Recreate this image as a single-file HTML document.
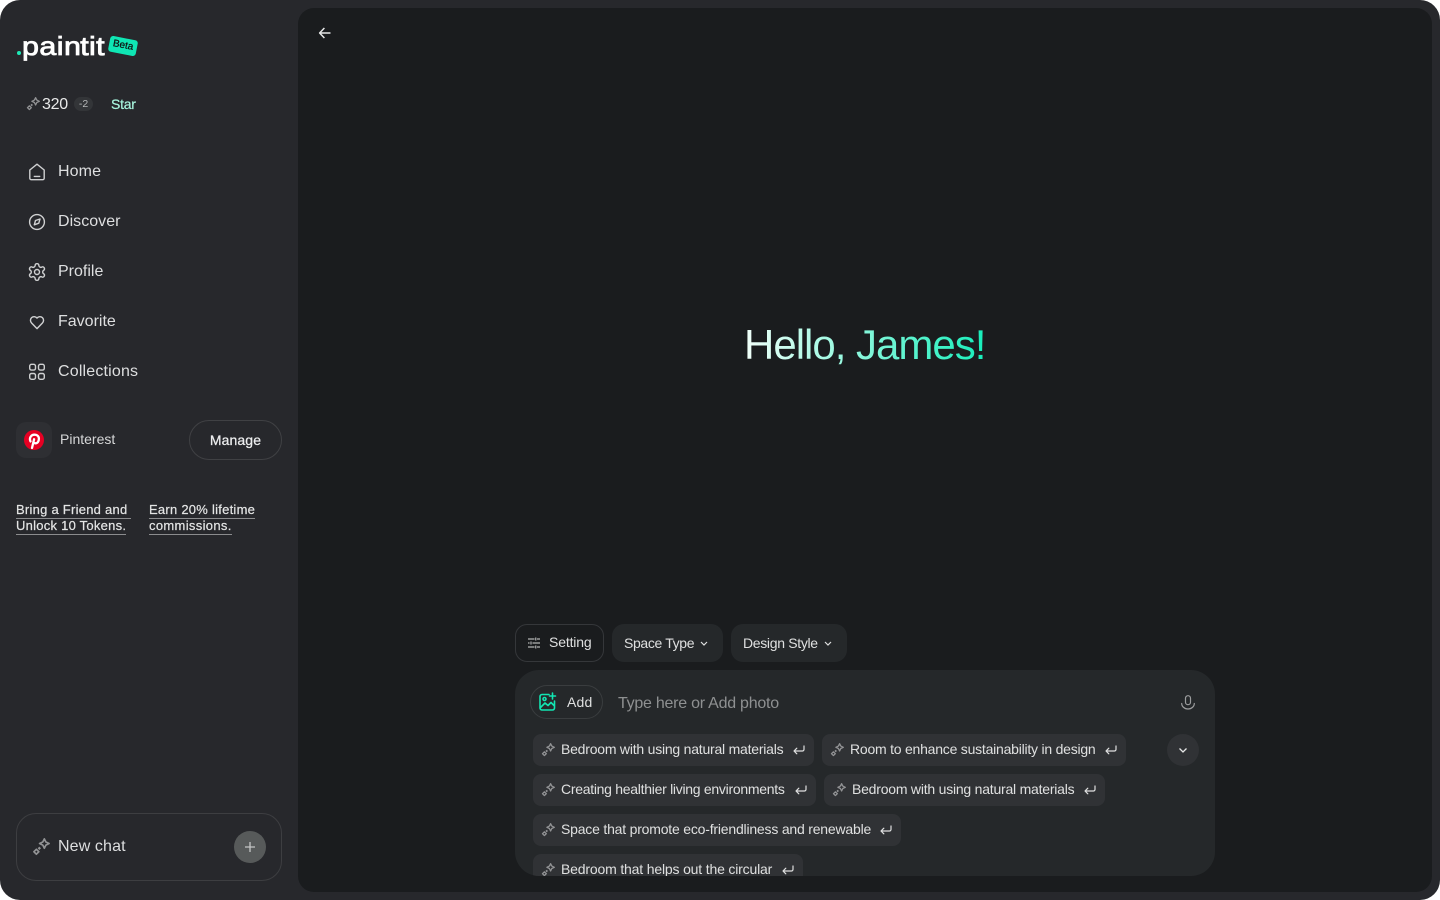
<!DOCTYPE html>
<html lang="en">
<head>
<meta charset="utf-8">
<title>paintit</title>
<style>
*{box-sizing:border-box;margin:0;padding:0}
html,body{width:1440px;height:900px;overflow:hidden;background:#fff}
body{font-family:"Liberation Sans",Arial,sans-serif;position:relative}
#app{position:absolute;left:0;top:0;width:1440px;height:900px;background:#27282c;border-radius:20px;overflow:hidden}
#main{position:absolute;left:298px;top:8px;width:1134px;height:884px;background:#1a1c1e;border-radius:16px}
.t{position:absolute;white-space:nowrap}
.nav{position:absolute;left:58px;font-size:16px;line-height:20px;color:#dedfe0;white-space:nowrap}
svg{position:absolute;display:block;overflow:visible}
.ic{fill:none;stroke:#cfd0d1;stroke-width:1.4;stroke-linecap:round;stroke-linejoin:round}
.chip{position:absolute;height:32px;background:#303235;border-radius:8px;color:#dfe0e0;font-size:14px;line-height:32px;letter-spacing:-.2px;white-space:nowrap}
.chip span{position:absolute;left:28px;top:-1px}
.pill{position:absolute;top:624px;height:38px;background:#25282a;border-radius:12px;color:#dfe0e0;font-size:14px;line-height:38px;letter-spacing:-.15px;white-space:nowrap}
.ref{font-size:13px;line-height:15px;color:#e4e5e5;-webkit-text-stroke:.2px #e4e5e5;letter-spacing:.25px}
</style>
</head>
<body>
<svg width="0" height="0" style="position:absolute">
<defs>
<symbol id="sp" viewBox="0 0 14 14"><path d="M9.600.700 10.800 3.100 13.300 4.300 10.800 5.500 9.600 8 8.400 5.500 5.900 4.300 8.400 3.100Z M3.400 8.800 5.300 10.700 3.400 12.600 1.500 10.700Z" fill="none" stroke="#929395" stroke-width="1.300" stroke-linejoin="round"/><path d="M5.700 6.700 7 8 5.700 9.300 4.400 8Z" fill="#929395"/></symbol>
<symbol id="ret" viewBox="0 0 12 10"><path d="M11 1v3.400a1.600 1.600 0 0 1-1.600 1.600H1.200M3.800 3.200 1 6l2.800 2.800" fill="none" stroke="#dfe0e0" stroke-width="1.200" stroke-linecap="round" stroke-linejoin="round"/></symbol>
</defs>
</svg>
<div id="app">
  <div id="main"></div>

  <!-- logo -->
  <div class="t" style="left:17px;top:51px;width:4px;height:4px;border-radius:50%;background:#1de9b6"></div>
  <div class="t" style="left:22px;top:30px;font-size:26px;line-height:32px;color:#fff;-webkit-text-stroke:.8px #fff;transform:scaleX(1.17);transform-origin:0 50%"><span style="letter-spacing:.4px">pai</span><span style="letter-spacing:-.6px">n</span><span style="letter-spacing:.2px">t</span><span style="letter-spacing:.4px">i</span>t</div>
  <div class="t" style="left:109px;top:38px;width:28px;height:16px;background:#0fe6b4;border-radius:3px;transform:rotate(11deg);color:#111;font-size:10px;line-height:16px;text-align:center;-webkit-text-stroke:.25px #111">Beta</div>

  <!-- tokens -->
  <svg style="left:26px;top:97px" width="14" height="14"><use href="#sp" width="14" height="14"/></svg>
  <div class="t" style="left:42px;top:96px;font-size:16px;line-height:18px;color:#e8e9e9;letter-spacing:-.3px">320</div>
  <div class="t" style="left:74px;top:97px;width:19px;height:14px;border-radius:7px;background:#333538;color:#b5b6b7;font-size:10.5px;line-height:14px;text-align:center">-2</div>
  <div class="t" style="left:111px;top:96px;font-size:14px;line-height:17px;color:#a8f5de;letter-spacing:-.25px;-webkit-text-stroke:.2px #a8f5de">Star</div>

  <!-- nav -->
  <svg class="ic" style="left:28px;top:163px" width="18" height="18" viewBox="0 0 18 18"><path d="M1.800 7 9 1.200 16.200 7v8.200a1.500 1.500 0 0 1-1.500 1.500H3.300a1.500 1.500 0 0 1-1.500-1.500Z"/><path d="M6.300 13.400h5.400"/></svg>
  <div class="nav" style="top:162px;letter-spacing:.1px">Home</div>
  <svg class="ic" style="left:28px;top:213px" width="18" height="18" viewBox="0 0 18 18"><circle cx="9" cy="9" r="7.400"/><path d="M12 6 10.800 10.200 6.300 11.800 7.500 7.500Z"/></svg>
  <div class="nav" style="top:212px;letter-spacing:.03px">Discover</div>
  <svg class="ic" style="left:27px;top:262px;stroke-width:1.700" width="20" height="20" viewBox="0 0 24 24"><path d="M12.220 2h-.44a2 2 0 0 0-2 2v.18a2 2 0 0 1-1 1.730l-.43.25a2 2 0 0 1-2 0l-.15-.08a2 2 0 0 0-2.730.73l-.22.38a2 2 0 0 0 .73 2.730l.15.1a2 2 0 0 1 1 1.720v.51a2 2 0 0 1-1 1.740l-.15.09a2 2 0 0 0-.73 2.730l.22.38a2 2 0 0 0 2.730.73l.15-.08a2 2 0 0 1 2 0l.43.25a2 2 0 0 1 1 1.730V20a2 2 0 0 0 2 2h.44a2 2 0 0 0 2-2v-.18a2 2 0 0 1 1-1.730l.43-.25a2 2 0 0 1 2 0l.15.08a2 2 0 0 0 2.730-.73l.22-.39a2 2 0 0 0-.73-2.730l-.15-.08a2 2 0 0 1-1-1.740v-.5a2 2 0 0 1 1-1.740l.15-.09a2 2 0 0 0 .73-2.730l-.22-.38a2 2 0 0 0-2.730-.73l-.15.08a2 2 0 0 1-2 0l-.43-.25a2 2 0 0 1-1-1.730V4a2 2 0 0 0-2-2z"/><circle cx="12" cy="12" r="3"/></svg>
  <div class="nav" style="top:262px">Profile</div>
  <svg class="ic" style="left:29px;top:313.500px;stroke-width:1.600" width="16" height="16" viewBox="0 0 18 18"><path d="M9 16.500 2.900 10.100a4.200 4.200 0 0 1 0-6A4.200 4.200 0 0 1 9 4.600a4.200 4.200 0 0 1 6.100-.5 4.200 4.200 0 0 1 0 6Z"/></svg>
  <div class="nav" style="top:312px">Favorite</div>
  <svg class="ic" style="left:28px;top:363px" width="18" height="18" viewBox="0 0 18 18"><rect x="1.700" y="1.300" width="5.800" height="5.800" rx="1.800"/><rect x="10.500" y="1.300" width="5.800" height="5.800" rx="1.800"/><rect x="1.700" y="10.500" width="5.800" height="5.800" rx="1.800"/><rect x="10.500" y="10.500" width="5.800" height="5.800" rx="1.800"/></svg>
  <div class="nav" style="top:362px;letter-spacing:.18px">Collections</div>

  <!-- pinterest -->
  <div class="t" style="left:16px;top:422px;width:36px;height:36px;border-radius:10px;background:#2e2f33"></div>
  <svg style="left:24px;top:430px" width="20" height="20" viewBox="0 0 20 20"><circle cx="10" cy="10" r="10" fill="#e60023"/><path d="M8 18 10.100 9.200M6.500 11.400C4.900 8 7.200 4.700 10.400 4.700c2.800 0 4.500 1.800 4.500 4.100 0 2.600-1.500 4.500-3.400 4.500-1 0-1.900-.6-2.100-1.500" fill="none" stroke="#fff" stroke-width="2.300" stroke-linecap="round"/></svg>
  <div class="t" style="left:60px;top:430px;font-size:14px;line-height:18px;color:#d6d7d8">Pinterest</div>
  <div class="t" style="left:189px;top:420px;width:93px;height:40px;border-radius:20px;border:1px solid #404144;color:#ecedee;font-size:14px;line-height:39px;text-align:center;letter-spacing:.1px;-webkit-text-stroke:.25px #ecedee">Manage</div>

  <!-- referral -->
  <div class="t ref" style="left:16px;top:502px">Bring a Friend and</div>
  <div class="t" style="left:16px;top:518px;width:115px;height:1px;background:#8b8c8e"></div>
  <div class="t ref" style="left:16px;top:518px">Unlock 10 Tokens.</div>
  <div class="t" style="left:16px;top:534px;width:110px;height:1px;background:#8b8c8e"></div>
  <div class="t ref" style="left:149px;top:502px">Earn 20% lifetime</div>
  <div class="t" style="left:149px;top:518px;width:106px;height:1px;background:#8b8c8e"></div>
  <div class="t ref" style="left:149px;top:518px;letter-spacing:.33px">commissions.</div>
  <div class="t" style="left:149px;top:534px;width:83px;height:1px;background:#8b8c8e"></div>

  <!-- new chat -->
  <div class="t" style="left:16px;top:813px;width:266px;height:68px;border-radius:20px;border:1px solid #3d3e41"></div>
  <svg style="left:32px;top:838px" width="18" height="18"><use href="#sp" width="18" height="18"/></svg>
  <div class="nav" style="top:837px;letter-spacing:.12px">New chat</div>
  <div class="t" style="left:234px;top:831px;width:32px;height:32px;border-radius:50%;background:#575a5a"></div>
  <svg style="left:245px;top:842px" width="10" height="10" viewBox="0 0 10 10"><path d="M5 0v10M0 5h10" stroke="#c4c5c5" stroke-width="1.300"/></svg>

  <!-- back arrow -->
  <svg style="left:319px;top:27px" width="12" height="12" viewBox="0 0 12 12"><path d="M11.500 6H.8M5.400 1 .6 6l4.800 5" fill="none" stroke="#e6e7e7" stroke-width="1.500" stroke-linejoin="round"/></svg>

  <!-- greeting -->
  <div class="t" style="left:744px;top:320px;font-size:42px;line-height:50px;letter-spacing:-1px;background:linear-gradient(90deg,#f1fff9 0%,#17eebb 100%);-webkit-background-clip:text;background-clip:text;color:transparent">Hello, James!</div>

  <!-- toolbar -->
  <div class="pill" style="left:515px;width:89px;background:#1a1c1e;border:1px solid #35373a;line-height:34px"><span style="position:absolute;left:33px;top:0">Setting</span></div>
  <svg style="left:528px;top:637px" width="12" height="12" viewBox="0 0 12 12"><path d="M0 2h6.500M9 2H12M0 6h1.500M4.500 6H12M0 10h6.500M9 10H12M7.700.500v3M3 4.500v3M7.700 8.500v3" stroke="#9a9b9c" stroke-width="1.400" fill="none"/></svg>
  <div class="pill" style="left:612px;width:111px;letter-spacing:-.35px"><span style="position:absolute;left:12px">Space Type</span></div>
  <svg style="left:700px;top:641px" width="8" height="5" viewBox="0 0 8 5"><path d="M1 1l3 3 3-3" fill="none" stroke="#dfe0e0" stroke-width="1.200"/></svg>
  <div class="pill" style="left:731px;width:116px;letter-spacing:-.32px"><span style="position:absolute;left:12px">Design Style</span></div>
  <svg style="left:824px;top:641px" width="8" height="5" viewBox="0 0 8 5"><path d="M1 1l3 3 3-3" fill="none" stroke="#dfe0e0" stroke-width="1.200"/></svg>

  <!-- composer -->
  <div class="t" style="left:515px;top:670px;width:700px;height:206px;background:#25282a;border-radius:24px;overflow:hidden">
    <div class="t" style="left:15px;top:15px;width:73px;height:34px;border-radius:17px;border:1px solid #3a3d3f"></div>
    <svg style="left:24px;top:23px" width="18" height="18" viewBox="0 0 18 18"><path d="M10 1.500H3a2 2 0 0 0-2 2v11.500a2 2 0 0 0 2 2h10.500a2 2 0 0 0 2-2V8M13.500 0v6M10.500 3h6M1.500 14.500 6 10l3 2.500 3-3 3.500 3.500" fill="none" stroke="#12e5b2" stroke-width="1.600" stroke-linecap="round" stroke-linejoin="round"/><circle cx="5.500" cy="6" r="1.500" fill="none" stroke="#12e5b2" stroke-width="1.600"/></svg>
    <div class="t" style="left:52px;top:24px;font-size:14px;line-height:16px;color:#dfe0e0;letter-spacing:.2px">Add</div>
    <div class="t" style="left:103px;top:24px;font-size:16px;line-height:19px;color:#8e9091;letter-spacing:-.25px">Type here or Add photo</div>
    <svg style="left:666px;top:25px" width="14" height="15" viewBox="0 0 14 15"><rect x="4.500" y=".700" width="5" height="9" rx="2.500" fill="none" stroke="#9c9d9e" stroke-width="1.200"/><path d="M.700 8.500a6.300 5.500 0 0 0 12.600 0" fill="none" stroke="#9c9d9e" stroke-width="1.200" stroke-linecap="round"/></svg>
    <div class="t" style="left:652px;top:64px;width:32px;height:32px;border-radius:50%;background:#303235"></div>
    <svg style="left:664px;top:78px" width="8" height="5" viewBox="0 0 8 5"><path d="M.5.500 4 4 7.500.500" fill="none" stroke="#e6e7e7" stroke-width="1.300"/></svg>

    <div class="chip" style="left:18px;top:64px;width:281px;letter-spacing:-.22px"><svg style="left:8px;top:9px" width="14" height="14"><use href="#sp" width="14" height="14"/></svg><span>Bedroom with using natural materials</span><svg style="left:260px;top:11px" width="12" height="10"><use href="#ret" width="12" height="10"/></svg></div>
    <div class="chip" style="left:307px;top:64px;width:304px;letter-spacing:-.225px"><svg style="left:8px;top:9px" width="14" height="14"><use href="#sp" width="14" height="14"/></svg><span>Room to enhance sustainability in design</span><svg style="left:283px;top:11px" width="12" height="10"><use href="#ret" width="12" height="10"/></svg></div>
    <div class="chip" style="left:18px;top:104px;width:283px;letter-spacing:-.28px"><svg style="left:8px;top:9px" width="14" height="14"><use href="#sp" width="14" height="14"/></svg><span>Creating healthier living environments</span><svg style="left:262px;top:11px" width="12" height="10"><use href="#ret" width="12" height="10"/></svg></div>
    <div class="chip" style="left:309px;top:104px;width:281px;letter-spacing:-.22px"><svg style="left:8px;top:9px" width="14" height="14"><use href="#sp" width="14" height="14"/></svg><span>Bedroom with using natural materials</span><svg style="left:260px;top:11px" width="12" height="10"><use href="#ret" width="12" height="10"/></svg></div>
    <div class="chip" style="left:18px;top:144px;width:368px"><svg style="left:8px;top:9px" width="14" height="14"><use href="#sp" width="14" height="14"/></svg><span>Space that promote eco-friendliness and renewable</span><svg style="left:347px;top:11px" width="12" height="10"><use href="#ret" width="12" height="10"/></svg></div>
    <div class="chip" style="left:18px;top:184px;width:270px;letter-spacing:-.17px"><svg style="left:8px;top:9px" width="14" height="14"><use href="#sp" width="14" height="14"/></svg><span>Bedroom that helps out the circular</span><svg style="left:249px;top:11px" width="12" height="10"><use href="#ret" width="12" height="10"/></svg></div>
  </div>
</div>
</body>
</html>
